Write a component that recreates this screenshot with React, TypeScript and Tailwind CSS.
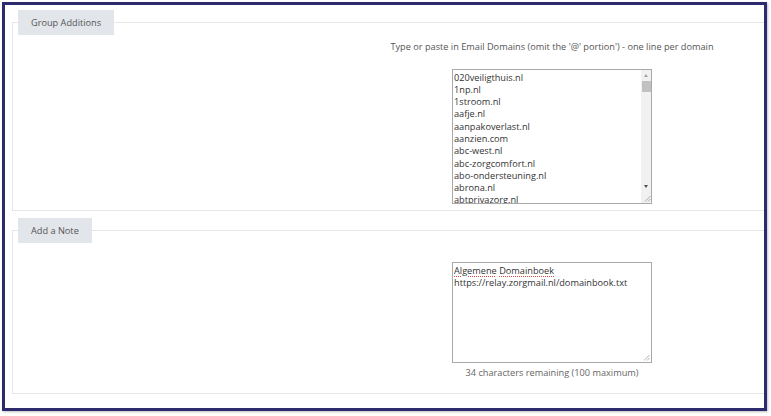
const domains = [
  "020veiligthuis.nl",
  "1np.nl",
  "1stroom.nl",
  "aafje.nl",
  "aanpakoverlast.nl",
  "aanzien.com",
  "abc-west.nl",
  "abc-zorgcomfort.nl",
  "abo-ondersteuning.nl",
  "abrona.nl",
  "abtprivazorg.nl",
];

function Grip() {
  return (
    <svg width="7" height="7" viewBox="0 0 7 7" className="block">
      <line x1="1" y1="6.5" x2="6.5" y2="1" stroke="#9a9a9a" strokeWidth="0.8" />
      <line x1="4" y1="6.5" x2="6.5" y2="4" stroke="#9a9a9a" strokeWidth="0.8" />
    </svg>
  );
}

export default function App() {
  return (
    <div
      className="w-[771px] h-[416px] bg-white pt-[2px] pl-[2px]"
      style={{ fontFamily: '"Open Sans", "Liberation Sans", sans-serif' }}
    >
      <div className="w-[765px] h-[409px] border-[3px] border-[#2e2a6e] overflow-hidden pt-[5px] pl-[7px] flex flex-col gap-[7px] shadow-[1px_1px_2px_rgba(0,0,0,0.25)]">
        <fieldset className="border border-[#e6e6e6] px-[5px] pb-[6px] mr-[-40px]">
          <legend className="bg-[#e2e5ea] px-[13px] h-[25px] leading-[25px] text-[9.2px] text-[#555]">
            Group Additions
          </legend>
          <div className="ml-[374px] w-[320px] flex flex-col items-center">
            <div className="mt-[6px] h-[12.5px] leading-[12.5px] text-[9.2px] text-[#555] whitespace-nowrap">
              Type or paste in Email Domains (omit the '@' portion') - one line per domain
            </div>
            <div className="mt-[15.5px] w-[200px] h-[135px] border border-[#a9a9a9] flex overflow-hidden bg-white">
              <div className="flex-1 overflow-hidden pl-[1px] pt-[1.5px] text-[9.2px] leading-[12.3px] text-[#333]">
                {domains.map((d) => (
                  <div key={d} className="h-[12.3px] whitespace-nowrap">
                    {d}
                  </div>
                ))}
              </div>
              <div className="w-[10px] bg-[#f1f1f1] flex flex-col items-center">
                <div className="h-[11px] flex items-center justify-center">
                  <div className="w-0 h-0 border-l-[2.5px] border-r-[2.5px] border-b-[3px] border-l-transparent border-r-transparent border-b-[#a3a3a3]" />
                </div>
                <div className="w-[9px] h-[11px] bg-[#c1c1c1]" />
                <div className="flex-1" />
                <div className="h-[10px] flex items-center justify-center">
                  <div className="w-0 h-0 border-l-[2.5px] border-r-[2.5px] border-t-[3px] border-l-transparent border-r-transparent border-t-[#505050]" />
                </div>
                <div className="h-[12px] w-[10px] flex items-end justify-end pb-[1px]">
                  <Grip />
                </div>
              </div>
            </div>
          </div>
        </fieldset>

        <fieldset className="border border-[#e6e6e6] px-[5px] pb-[13px] mr-[-40px]">
          <legend className="bg-[#e2e5ea] px-[13px] h-[25px] leading-[25px] text-[9.2px] text-[#555]">
            Add a Note
          </legend>
          <div className="ml-[374px] w-[320px] flex flex-col items-center">
            <div className="mt-[19px] w-[200px] h-[101px] border border-[#a9a9a9] flex flex-col bg-white">
              <div className="flex-1 pl-[1px] pt-[1.5px] text-[9.2px] leading-[12.3px] text-[#333]">
                <div className="whitespace-nowrap">
                  <span className="underline decoration-dotted decoration-[#e04848] underline-offset-[2px]">Algemene</span>{" "}
                  <span className="underline decoration-dotted decoration-[#e04848] underline-offset-[2px]">Domainboek</span>
                </div>
                <div className="whitespace-nowrap">https://relay.zorgmail.nl/domainbook.txt</div>
              </div>
              <div className="flex justify-end pr-[1px] pb-[1px]">
                <Grip />
              </div>
            </div>
            <div className="mt-[4px] h-[12.5px] leading-[12.5px] text-[9.2px] text-[#666] whitespace-nowrap">
              34 characters remaining (100 maximum)
            </div>
          </div>
        </fieldset>
      </div>
    </div>
  );
}
